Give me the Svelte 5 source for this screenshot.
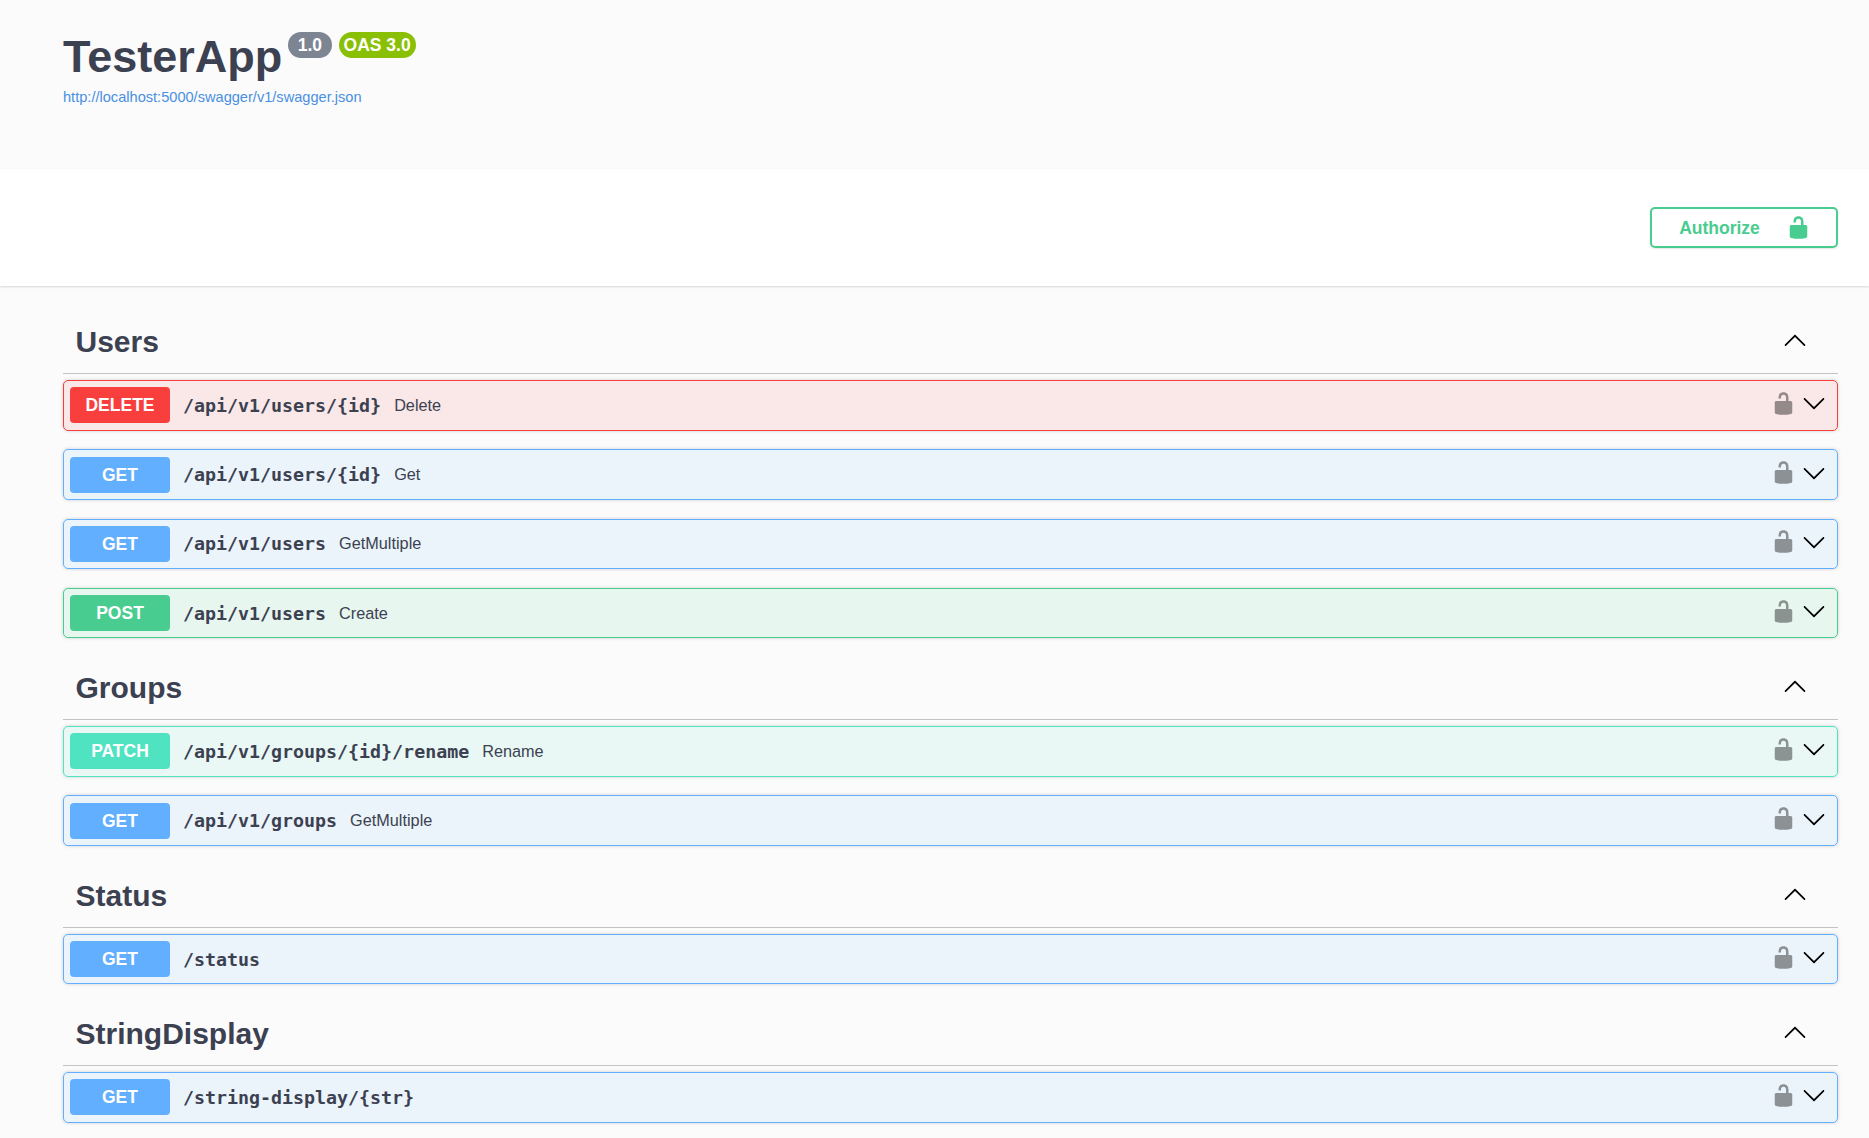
<script lang="ts">
  const sections = [
    {
      name: "Users",
      ops: [
        { method: "delete", path: "/api/v1/users/{id}", desc: "Delete" },
        { method: "get", path: "/api/v1/users/{id}", desc: "Get" },
        { method: "get", path: "/api/v1/users", desc: "GetMultiple" },
        { method: "post", path: "/api/v1/users", desc: "Create" },
      ],
    },
    {
      name: "Groups",
      ops: [
        { method: "patch", path: "/api/v1/groups/{id}/rename", desc: "Rename" },
        { method: "get", path: "/api/v1/groups", desc: "GetMultiple" },
      ],
    },
    { name: "Status", ops: [{ method: "get", path: "/status", desc: "" }] },
    { name: "StringDisplay", ops: [{ method: "get", path: "/string-display/{str}", desc: "" }] },
  ];

  const unlock =
    "M15.8 8H14V5.6C14 2.703 12.665 1 10 1 7.334 1 6 2.703 6 5.6V6h2v-.801C8 3.754 8.797 3 10 3c1.203 0 2 .754 2 2.199V8H4c-.553 0-1 .646-1 1.199V17c0 .549.428 1.139.951 1.307l1.197.387C5.672 18.861 6.55 19 7.1 19h5.8c.549 0 1.428-.139 1.951-.307l1.196-.387c.524-.167.953-.757.953-1.306V9.199C17 8.646 16.352 8 15.8 8z";
  const arrowUp =
    "M2.582 13.891c-.272.268-.709.268-.979 0s-.271-.701 0-.969l7.908-7.83c.27-.268.707-.268.979 0l7.908 7.83c.27.268.27.701 0 .969-.271.268-.709.268-.978 0L10 6.75l-7.418 7.141z";
  const arrowDown =
    "M17.418 6.109c.272-.268.709-.268.979 0s.271.701 0 .969l-7.908 7.83c-.27.268-.707.268-.979 0l-7.908-7.83c-.27-.268-.27-.701 0-.969.271-.268.709-.268.979 0L10 13.25l7.418-7.141z";
</script>

<div class="page">
  <header class="info">
    <div class="title-row">
      <h1>TesterApp</h1>
      <span class="badge version">1.0</span>
      <span class="badge oas">OAS 3.0</span>
    </div>
    <a class="spec-link" href="#spec">http://localhost:5000/swagger/v1/swagger.json</a>
  </header>

  <div class="auth-bar">
    <button class="authorize">
      <span>Authorize</span>
      <svg viewBox="0 0 20 20" width="25" height="25"><path d={unlock} /></svg>
    </button>
  </div>

  <main class="tags">
    {#each sections as section}
      <section>
        <div class="tag">
          <h3>{section.name}</h3>
          <svg class="tag-arrow" viewBox="0 0 20 20" width="24" height="24"><path d={arrowUp} /></svg>
        </div>
        {#each section.ops as op}
          <div class="op {op.method}">
            <span class="method">{op.method.toUpperCase()}</span>
            <span class="path">{op.path}</span>
            {#if op.desc}<span class="desc">{op.desc}</span>{/if}
            <svg class="lock" viewBox="0 0 20 20" width="25" height="25"><path d={unlock} /></svg>
            <svg class="chevron" viewBox="0 0 20 20" width="24" height="24"><path d={arrowDown} /></svg>
          </div>
        {/each}
      </section>
    {/each}
  </main>
</div>

<style>
  :global(body) {
    margin: 0;
    background: #fbfbfb;
    font-family: "Liberation Sans", Arial, sans-serif;
    color: #3b4151;
  }

  .page {
    height: 1138px;
    overflow: hidden;
  }

  .info {
    height: 169px;
    box-sizing: border-box;
    padding: 30px 31px 0 63px;
  }

  .title-row {
    display: flex;
    align-items: flex-start;
  }

  h1 {
    margin: 0;
    font-size: 45px;
    line-height: 54px;
    font-weight: 700;
    color: #3b4151;
  }

  .badge {
    margin-top: 2px;
    height: 26px;
    line-height: 26px;
    border-radius: 13px;
    color: #fff;
    font-size: 17.5px;
    font-weight: 700;
  }

  .version {
    margin-left: 6px;
    padding: 0 9.5px;
    background: #7d8492;
  }

  .oas {
    margin-left: 7px;
    padding: 0 5px;
    background: #89bf04;
  }

  .spec-link {
    display: block;
    margin-top: 3px;
    font-size: 14.6px;
    line-height: 20px;
    color: #4990e2;
    text-decoration: none;
  }

  .auth-bar {
    height: 117px;
    box-sizing: border-box;
    background: #fff;
    padding-right: 31px;
    display: flex;
    justify-content: flex-end;
    align-items: flex-start;
    padding-top: 38px;
    box-shadow: 0 1px 2px 0 rgba(0, 0, 0, 0.15);
  }

  .authorize {
    width: 188px;
    height: 41px;
    box-sizing: border-box;
    display: flex;
    align-items: center;
    justify-content: center;
    gap: 26px;
    padding: 1px 0 0 2px;
    background: transparent;
    border: 2px solid #49cc90;
    border-radius: 5px;
    color: #49cc90;
    font-family: inherit;
    font-size: 17.5px;
    font-weight: 700;
    box-shadow: 0 1px 2px rgba(0, 0, 0, 0.1);
  }

  .authorize svg {
    fill: #49cc90;
    margin-top: -1px;
  }

  .tags {
    padding: 25px 31px 0 63px;
  }

  .tag {
    height: 63px;
    box-sizing: border-box;
    display: flex;
    align-items: center;
    justify-content: space-between;
    padding: 0 31px 0 12.5px;
    margin-bottom: 6px;
    border-bottom: 1px solid rgba(59, 65, 81, 0.3);
  }

  h3 {
    margin: 0;
    font-size: 30px;
    font-weight: 700;
  }

  .tag-arrow {
    fill: #000;
    margin-top: -2px;
  }

  .op {
    height: 50.5px;
    box-sizing: border-box;
    display: flex;
    align-items: center;
    padding: 0 11px 0 6px;
    margin-bottom: 18.8px;
    border: 1.2px solid;
    border-radius: 5px;
    box-shadow: 0 0 3.6px rgba(0, 0, 0, 0.19);
  }

  .method {
    width: 100px;
    height: 36px;
    line-height: 36px;
    flex: none;
    text-align: center;
    border-radius: 4px;
    color: #fff;
    font-size: 17.5px;
    font-weight: 700;
  }

  .path {
    margin-left: 13px;
    font-family: "DejaVu Sans Mono", "Liberation Mono", monospace;
    font-size: 18.3px;
    font-weight: 700;
  }

  .desc {
    margin-left: 13px;
    font-size: 16.25px;
  }

  .lock {
    margin-left: auto;
    margin-top: -4px;
    fill: #000;
    opacity: 0.4;
  }

  .chevron {
    margin-left: 6px;
    margin-top: -4px;
    fill: #000;
  }

  .delete { background: rgba(249, 62, 62, 0.1); border-color: #f93e3e; }
  .delete .method { background: #f93e3e; }
  .get { background: rgba(97, 175, 254, 0.1); border-color: #61affe; }
  .get .method { background: #61affe; }
  .post { background: rgba(73, 204, 144, 0.1); border-color: #49cc90; }
  .post .method { background: #49cc90; }
  .patch { background: rgba(80, 227, 194, 0.1); border-color: #50e3c2; }
  .patch .method { background: #50e3c2; }
</style>
